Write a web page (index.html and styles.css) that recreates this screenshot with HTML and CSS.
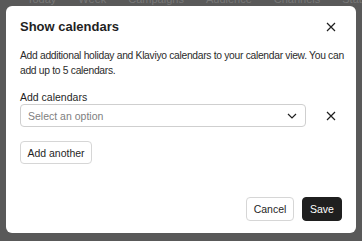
FILE: index.html
```html
<!DOCTYPE html>
<html lang="en">
<head>
    <title>Show calendars</title>
    <link rel="stylesheet" href="styles.css">
</head>
<body>
    <div class="page_nav">
        <span>Today</span>
        <span>Week &#8964;</span>
        <span>Campaigns &#8964;</span>
        <span>Audience &#8964;</span>
        <span>Channels &#8964;</span>
        <span>Status</span>
    </div>

    <div class="modal">
        <div class="m_head">
            <h2>Show calendars</h2>
            <a href="#none" class="m_close">
                <svg width="10" height="10" viewBox="0 0 10 10"><path d="M1 1L9 9M9 1L1 9" stroke="#1f1f1f" stroke-width="1.2" fill="none"/></svg>
            </a>
        </div>
        <p class="m_desc">Add additional holiday and Klaviyo calendars to your calendar view. You can<br>add up to 5 calendars.</p>
        <label class="m_label">Add calendars</label>
        <div class="m_row">
            <div class="m_select">
                <span>Select an option</span>
                <svg width="10" height="6" viewBox="0 0 10 6"><path d="M1 1L5 5L9 1" stroke="#1f1f1f" stroke-width="1.2" fill="none"/></svg>
            </div>
            <a href="#none" class="m_remove">
                <svg width="10" height="10" viewBox="0 0 10 10"><path d="M1 1L9 9M9 1L1 9" stroke="#1f1f1f" stroke-width="1.2" fill="none"/></svg>
            </a>
        </div>
        <div class="m_add_wrap">
            <a href="#none" class="btn m_add">Add another</a>
        </div>
        <div class="m_foot">
            <a href="#none" class="btn">Cancel</a>
            <a href="#none" class="btn btn_dark">Save</a>
        </div>
    </div>
</body>
</html>
```

FILE: styles.css
```css
body {padding: 0px; margin: 0px; background-color: #595959; font-family: "Liberation Sans", Arial, sans-serif; color: #1f1f1f; height: 241px; overflow: hidden; position: relative;}
a{text-decoration: none; color: inherit;}
/* ============ page behind ============ */
.page_nav {
    display: flex;
    gap: 22px;
    padding: 0px 0px 0px 27px;
    margin-top: -7px;
    height: 12px;
    font-size: 11px;
    color: #777;
}
/* ============ modal ============ */
.modal {
    position: absolute;
    left: 6px;
    top: 6px;
    width: 350px;
    height: 227px;
    background-color: #fff;
    border-radius: 6px;
    padding: 0px 14px;
    box-sizing: border-box;
    display: flex;
    flex-direction: column;
}
.m_head {
    display: flex;
    align-items: center;
    justify-content: space-between;
    padding-top: 13px;
    height: 16px;
}
.m_head h2 {
    margin: 0;
    font-size: 13px;
    font-weight: 700;
    line-height: 16px;
}
.m_close,
.m_remove {
    display: flex;
    width: 20px;
    justify-content: center;
    margin-right: 1px;
}
.m_desc {
    margin: 13px 0px 0px;
    font-size: 10.3px;
    letter-spacing: -0.3px;
    line-height: 15px;
    white-space: nowrap;
    color: #2b2b2b;
}
.m_label {
    margin-top: 13px;
    font-size: 10.5px;
    line-height: 13px;
}
.m_row {
    display: flex;
    align-items: center;
    justify-content: space-between;
}
.m_select {
    width: 286px;
    height: 23px;
    box-sizing: border-box;
    border: 1px solid #cfcfcf;
    border-radius: 4px;
    display: flex;
    align-items: center;
    justify-content: space-between;
    padding: 0px 8px 0px 7px;
    font-size: 10.5px;
    color: #808080;
}
.btn {
    display: flex;
    align-items: center;
    justify-content: center;
    height: 24px;
    box-sizing: border-box;
    border: 1px solid #d6d6d6;
    border-radius: 4px;
    font-size: 10.5px;
    padding: 0px 8px;
    background-color: #fff;
    white-space: nowrap;
}
.m_add_wrap {
    display: flex;
    margin-top: 14px;
}
.m_add {
    width: 72px;
    height: 23px;
}
.m_foot {
    margin-top: auto;
    padding-bottom: 12px;
    display: flex;
    justify-content: flex-end;
    gap: 8px;
}
.m_foot .btn:first-child {
    width: 48px;
}
.btn_dark {
    width: 40px;
    background-color: #1f1f1f;
    border-color: #1f1f1f;
    color: #fff;
}
```
